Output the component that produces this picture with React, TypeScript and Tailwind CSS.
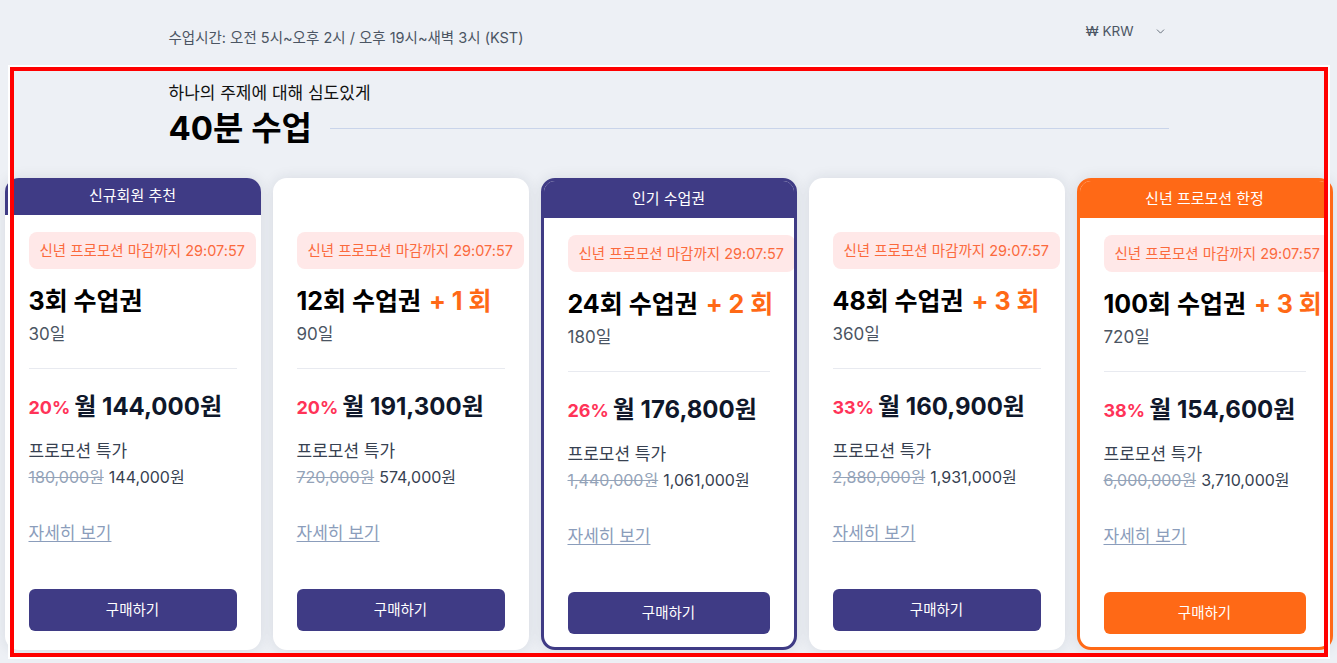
import { ChevronDown } from "lucide-react";

type Plan = {
  badge?: string;
  tone: "purple" | "orange";
  bordered: boolean;
  count: string;
  bonus?: string;
  days: string;
  discount: string;
  monthly: string;
  original: string;
  promo: string;
};

const plans: Plan[] = [
  {
    badge: "신규회원 추천",
    tone: "purple",
    bordered: false,
    count: "3회 수업권",
    days: "30일",
    discount: "20%",
    monthly: "월 144,000원",
    original: "180,000원",
    promo: "144,000원",
  },
  {
    tone: "purple",
    bordered: false,
    count: "12회 수업권",
    bonus: "+ 1 회",
    days: "90일",
    discount: "20%",
    monthly: "월 191,300원",
    original: "720,000원",
    promo: "574,000원",
  },
  {
    badge: "인기 수업권",
    tone: "purple",
    bordered: true,
    count: "24회 수업권",
    bonus: "+ 2 회",
    days: "180일",
    discount: "26%",
    monthly: "월 176,800원",
    original: "1,440,000원",
    promo: "1,061,000원",
  },
  {
    tone: "purple",
    bordered: false,
    count: "48회 수업권",
    bonus: "+ 3 회",
    days: "360일",
    discount: "33%",
    monthly: "월 160,900원",
    original: "2,880,000원",
    promo: "1,931,000원",
  },
  {
    badge: "신년 프로모션 한정",
    tone: "orange",
    bordered: true,
    count: "100회 수업권",
    bonus: "+ 3 회",
    days: "720일",
    discount: "38%",
    monthly: "월 154,600원",
    original: "6,000,000원",
    promo: "3,710,000원",
  },
];

function PlanCard({ plan }: { plan: Plan }) {
  const purple = plan.tone === "purple";
  return (
    <div
      className={`flex h-[472px] w-[256px] shrink-0 flex-col overflow-hidden rounded-[14px] bg-white shadow-[0_0_14px_rgba(30,41,59,0.10)] ${
        plan.bordered ? (purple ? "border-[3px] border-[#3f3b85]" : "border-[3px] border-[#ff6916]") : ""
      }`}
    >
      {/* header ribbon */}
      {plan.badge ? (
        <div
          className={`flex h-[37px] shrink-0 items-center justify-center text-[15px] text-white ${
            purple ? "bg-[#3f3b85]" : "bg-[#ff6916]"
          }`}
        >
          {plan.badge}
        </div>
      ) : (
        <div className="h-[37px] shrink-0" />
      )}

      <div className="flex flex-col px-6 pt-[17px]">
        <div className="flex h-[37px] w-max items-center whitespace-nowrap rounded-lg bg-[#ffe8e8] px-[11px] text-[14.5px] text-[#fb6a3d]">
          신년 프로모션 마감까지 29:07:57
        </div>

        <div className="mt-[17px] flex items-center gap-[8px] whitespace-nowrap text-[25px] font-bold leading-[30px] text-black">
          <span>{plan.count}</span>
          {plan.bonus && <span className="text-[#ff6916]">{plan.bonus}</span>}
        </div>
        <div className="mt-[6px] text-[17px] leading-[24px] text-[#4b5563]">{plan.days}</div>

        <div className="mt-[22px] h-px w-full bg-[#e8eaf0]" />

        <div className="mt-[22px] flex h-[32px] items-center gap-[4px] whitespace-nowrap">
          <span className="text-[18px] font-bold text-[#ff3358]">{plan.discount}</span>
          <span className="text-[24px] font-bold text-[#0f172a]">{plan.monthly}</span>
        </div>

        <div className="mt-[16px] text-[17px] leading-[24px] text-[#374151]">프로모션 특가</div>
        <div className="mt-[2px] flex gap-[5px] whitespace-nowrap text-[16px] leading-[24px]">
          <span className="text-[#94a3b8] line-through">{plan.original}</span>
          <span className="text-[#374151]">{plan.promo}</span>
        </div>

        <a className="mt-[32px] w-max text-[17px] leading-[24px] text-[#8b9dbb] underline underline-offset-2">
          자세히 보기
        </a>

        <button
          className={`mt-[44px] h-[42px] w-full rounded-md text-[14.5px] text-white ${
            purple ? "bg-[#3f3b85]" : "bg-[#ff6916]"
          }`}
        >
          구매하기
        </button>
      </div>
    </div>
  );
}

export default function App() {
  return (
    <div
      className="relative min-h-screen w-full overflow-hidden bg-[#edf0f5]"
      style={{ fontFamily: "Inter, 'Noto Sans CJK KR', 'Noto Sans', sans-serif" }}
    >
      {/* top bar */}
      <div className="mx-auto flex h-[47px] w-[1000px] items-start justify-between pt-[22px]">
        <div className="mt-[7px] text-[14.5px] leading-[18px] text-[#4b5563]">
          수업시간: 오전 5시~오후 2시 / 오후 19시~새벽 3시 (KST)
        </div>
        <div className="flex items-center gap-[20px] text-[13.5px] leading-[18px] text-[#4b5563]">
          <span>₩ KRW</span>
          <ChevronDown size={13} strokeWidth={1.5} className="mr-[2px]" />
        </div>
      </div>

      {/* section heading */}
      <div className="mx-auto mt-[35px] w-[1000px]">
        <div className="text-[17px] leading-[22px] text-[#111]">하나의 주제에 대해 심도있게</div>
        <div className="mt-[4px] flex items-center">
          <h2 className="text-[33px] font-bold leading-[40px] text-black">40분 수업</h2>
          <div className="ml-[18px] h-px flex-1 bg-[#c9d4ea]" />
        </div>
      </div>

      {/* plan cards */}
      <div className="mt-[30px] flex justify-center gap-[12px]">
        {plans.map((plan) => (
          <PlanCard key={plan.count} plan={plan} />
        ))}
      </div>

      {/* highlight frame */}
      <div className="pointer-events-none absolute left-[10px] top-[67px] h-[590px] w-[1318px] border-4 border-[#ff0000] shadow-[0_0_0_2px_#ffffff]" />
    </div>
  );
}
